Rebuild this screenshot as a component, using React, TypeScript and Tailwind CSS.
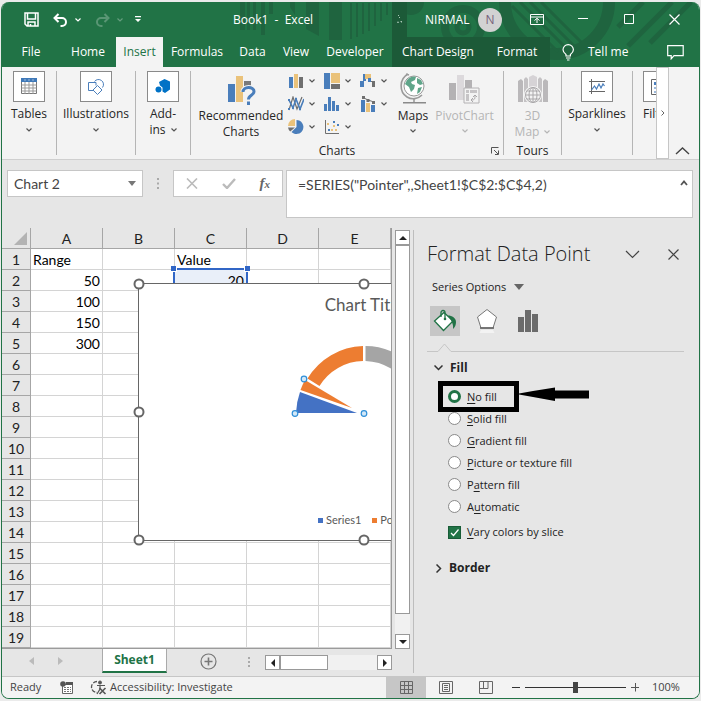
import { useState } from 'react'
import type { ReactNode } from 'react'
import clsx from 'clsx'

const columns = ['A', 'B', 'C', 'D', 'E']

const rows: Record<string, string>[] = [
  { A: 'Range', C: 'Value' },
  { A: '50', C: '20' },
  { A: '100' },
  { A: '150' },
  { A: '300' },
  ...Array.from({ length: 14 }, () => ({})),
]

const tabs = [
  { label: 'File', className: 'w-[58px]' },
  { label: 'Home', className: 'w-[56px]' },
  { label: 'Insert', className: 'w-[47px] bg-[#f3f3f3] text-[#217346]' },
  { label: 'Formulas', className: 'w-[68px]' },
  { label: 'Data', className: 'w-[43px]' },
  { label: 'View', className: 'w-[44px]' },
  { label: 'Developer', className: 'w-[74px]' },
  { label: 'Chart Design', className: 'w-[92px] bg-[#1c5a38]' },
  { label: 'Format', className: 'w-[66px] bg-[#1c5a38]' },
]

const fills = [
  { key: 'N', before: '', after: 'o fill' },
  { key: 'S', before: '', after: 'olid fill' },
  { key: 'G', before: '', after: 'radient fill' },
  { key: 'P', before: '', after: 'icture or texture fill' },
  { key: 'a', before: 'P', after: 'ttern fill' },
  { key: 'u', before: 'A', after: 'tomatic' },
]

function Chevron({ className }: { className?: string }) {
  return (
    <svg width="6" height="4" viewBox="0 0 6 4" className={className}>
      <path d="M.5.5 3 3 5.5.5" fill="none" stroke="currentColor" strokeWidth="1.2" />
    </svg>
  )
}

function HeaderArt() {
  return (
    <svg
      className="absolute right-0 top-0"
      width="697"
      height="65"
      viewBox="2 2 697 65"
      fill="#1f643f"
    >
      <path d="M240 2h5v28h-5zM247 2h3v28h-3zM253 2h3v28h-3zM261 2h4v33h-4zM269 2h4v12h-4zM290 2h5v13l-5-8zM306 2h13v34l-13-7zM329 2h13v38h-13z" />
      <path d="M350 3h2v36h-2zM356 3h2v34h-2zM362 3h2v31h-2zM368 3h2v28h-2zM374 3h2v23h-2zM380 3h2v18h-2zM386 3h2v12h-2z" />
      <circle cx="411" cy="2" r="13" />
      <g fill="none" stroke="#1f643f">
        <circle cx="463" cy="27" r="18" strokeWidth="8" />
        <circle cx="463" cy="27" r="6" strokeWidth="5" />
        <path d="M505 2a52 52 0 0 0 104 0" strokeWidth="12" />
        <path d="m512 6 46 46M520 2l50 50M530 2l46 46M541 2l40 40" strokeWidth="3" />
        <path d="m628 46 44-44M650 43l41-41M618 27l25-25" strokeWidth="5" />
      </g>
    </svg>
  )
}

function TitleBar() {
  return (
    <div className="relative flex h-[35px] items-center">
      <div className="flex w-[202px] items-center pl-[22px]">
        <button aria-label="Save">
          <svg width="15" height="15" viewBox="0 0 15 15" fill="none" stroke="#fff" strokeWidth="1.5">
            <path d="M1 1h13v13H3l-2-2zM3.5 1v6h8V1M4 14v-4h7v4M6.5 12v2" />
          </svg>
        </button>
        <button aria-label="Undo" className="ml-[14px]">
          <svg width="15" height="14" viewBox="0 0 15 14" fill="none" stroke="#fff" strokeWidth="2">
            <path d="M5.500 1 1.500 5l4 4M2 5h7a4 4 0 0 1 0 8H7.500" />
          </svg>
        </button>
        <Chevron className="ml-[7px]" />
        <button aria-label="Redo" className="ml-[14px] opacity-25">
          <svg width="15" height="14" viewBox="0 0 15 14" fill="none" stroke="#fff" strokeWidth="2">
            <path d="m9.500 1 4 4-4 4M13 5H6a4 4 0 0 0 0 8h1.500" />
          </svg>
        </button>
        <Chevron className="ml-[7px] opacity-30" />
        <button aria-label="Customize Quick Access Toolbar" className="ml-[12px]">
          <svg width="6" height="7" viewBox="0 0 6 7" fill="#fff">
            <path d="M0 0h6v1.200H0zM0 3h6L3 6z" />
          </svg>
        </button>
      </div>
      <h1 className="flex-1 whitespace-pre pl-[29px]">Book1  -  Excel</h1>
      <div className="h-full w-[15px] bg-[#1c5a38] pt-[13px] pl-[5px]">
        <svg width="6" height="9" viewBox="0 0 6 9" fill="#a9c7b6">
          <path d="M1 0h1v1H1zM2 2h1v1H2zM0 8l1-2 1 2zM3 6h2v2z" />
        </svg>
      </div>
      <div className="flex w-[107px] items-center justify-between pl-[18px] pr-[12px]">
        <span>NIRMAL</span>
        <span className="flex size-6 items-center justify-center rounded-full bg-[#d2d2d2] text-[#77627b]">
          N
        </span>
      </div>
      <div className="flex w-[185px] items-center justify-between pl-[16px] pr-[19px]">
        <button aria-label="Ribbon Display Options">
          <svg width="14" height="11" viewBox="0 0 14 11" fill="none" stroke="#fff">
            <path d="M.5.5h13v10H.5zM.5 3h13M7 9V4.500M4.500 6.500 7 4.300l2.500 2.200" />
          </svg>
        </button>
        <button aria-label="Minimize">
          <svg width="11" height="10" viewBox="0 0 11 10">
            <path d="M0 3.500h10" stroke="#fff" />
          </svg>
        </button>
        <button aria-label="Maximize">
          <svg width="11" height="11" viewBox="0 0 11 11">
            <path d="M.5.5h9v9H.5z" fill="none" stroke="#fff" />
          </svg>
        </button>
        <button aria-label="Close">
          <svg width="11" height="11" viewBox="0 0 11 11">
            <path d="m.5.5 10 10m0-10-10 10" stroke="#fff" strokeWidth="1.200" />
          </svg>
        </button>
      </div>
    </div>
  )
}

function TabBar() {
  return (
    <nav className="relative flex h-[30px]">
      {tabs.map((tab) => (
        <button key={tab.label} className={clsx('shrink-0', tab.className)}>
          {tab.label}
        </button>
      ))}
      <button className="ml-[12px] flex items-center gap-[13px]">
        <svg width="13" height="17" viewBox="0 0 13 17" fill="none" stroke="#fff" strokeWidth="1.200">
          <path d="M4 12V10.500C2 9 1 7.500 1 5.800a5.200 5.200 0 0 1 10.400 0c0 1.700-1 3.200-3 4.700V12zM4 14h4.500M5 16h2.500" />
        </svg>
        Tell me
      </button>
      <button aria-label="Comments" className="ml-auto mr-[15px]">
        <svg width="17" height="15" viewBox="0 0 17 15" fill="none" stroke="#fff" strokeWidth="1.200">
          <path d="M.7.7h15.500v10H7L4.200 13.800v-3.100H.7z" />
        </svg>
      </button>
    </nav>
  )
}

function BoxedIcon({ children }: { children: ReactNode }) {
  return (
    <span className="flex h-[31px] w-8 shrink-0 items-center justify-center border border-[#8a8a8a] bg-white">
      {children}
    </span>
  )
}

function Group({ className, children }: { className: string; children: ReactNode }) {
  return (
    <div className={clsx('my-1 shrink-0 border-r border-[#b5b5b5]', className)}>{children}</div>
  )
}

function BigButton({ label, icon }: { label: string; icon: ReactNode }) {
  return (
    <button className="flex w-full flex-col items-center">
      <BoxedIcon>{icon}</BoxedIcon>
      <span className="mt-[3px] leading-[18px]">{label}</span>
      <Chevron className="mt-[5px] text-[#555]" />
    </button>
  )
}

const TableIcon = () => (
  <svg width="17" height="17" viewBox="0 0 17 17">
    <path d="M.5.5h15v15H.5z" fill="#fff" stroke="#777" />
    <path d="M0 0h16v4H0z" fill="#3f79b8" />
    <path d="M.5 7h15M.5 10h15M.5 13h15M4 4v12M8 4v12M12 4v12" stroke="#999" />
    <path d="M3.500 1.500h1v1h-1zM7.500 1.500h1v1h-1zM11.500 1.500h1v1h-1z" fill="#fff" />
  </svg>
)

const ShapesIcon = () => (
  <svg width="18" height="16" viewBox="0 0 18 16" fill="none" stroke="#4a7ebb">
    <path d="M6 11.500H1.500v-8H9v3" />
    <path d="M7.500 2.500a5 5 0 1 1 8 6" />
    <path d="m10.500 6.500 4.500 4.500-4.500 4.500L6 11z" fill="#fff" />
  </svg>
)

const AddinIcon = () => (
  <svg width="16" height="15" viewBox="0 0 16 15" fill="#0072c6">
    <path d="m9.500 0 5.500 2.500v8L10 14 7.500 12.500V8.500L5 6.500 4 3z" />
    <circle cx="3.500" cy="10.500" r="3" />
  </svg>
)

const SparkIcon = () => (
  <svg width="18" height="16" viewBox="0 0 18 16" fill="none">
    <path d="M3.500 0v15M1 2.500h16M1 12.500h16" stroke="#666" />
    <path d="m3.500 11 3-4 2 3 2.500-5 2 4 2-4 1.500 2" stroke="#4a7ebb" strokeWidth="1.200" />
  </svg>
)

const smallCharts: { name: string; art: ReactNode }[] = [
  {
    name: 'Column',
    art: (
      <>
        <path d="M1 4h4v11H1z" fill="#4a7ebb" />
        <path d="M6 1h4v14H6z" fill="#eac27a" />
        <path d="M11 4h4v11h-4z" fill="#6f6f6f" />
      </>
    ),
  },
  {
    name: 'Hierarchy',
    art: (
      <>
        <path d="M0 0h6v16H0z" fill="#4a7ebb" />
        <path d="M7 0h9v10H7z" fill="#eac27a" />
        <path d="M7 11h9v5H7z" fill="#6f6f6f" />
      </>
    ),
  },
  {
    name: 'Waterfall',
    art: (
      <>
        <path d="M0 8h4v6H0zM3 1h3v7H3z" fill="#4a7ebb" />
        <path d="M5 1h6v4H8v1H5z" fill="#eac27a" />
        <path d="M8 5h3v4H8z" fill="#4a7ebb" />
        <path d="M11 8h4v6h-3V9h-1z" fill="#6f6f6f" />
      </>
    ),
  },
  {
    name: 'Line',
    art: (
      <g fill="none" strokeWidth="1.200">
        <path d="m1 14 4-13 4 12 5-12" stroke="#6f6f6f" />
        <path d="m1 4 4 8 3-9 4 10 4-10" stroke="#4a7ebb" strokeWidth="1.600" />
        <path d="M4 11h2v2H4zM7 2h2v2H7zM11 12h2v2h-2zM0 3h2v2H0zM0 12h2v2H0z" fill="#4a7ebb" />
      </g>
    ),
  },
  {
    name: 'Statistic',
    art: <path d="M0 8h3v7H0zM4 1h3v14H4zM8 5h3v10H8zM12 9h3v6h-3z" fill="#4a7ebb" />,
  },
  {
    name: 'Combo',
    art: (
      <>
        <path d="M1 4h4v12H1z" fill="#4a7ebb" />
        <path d="M6 7h4v9H6z" fill="#eac27a" />
        <path d="M11 9h4v7h-4z" fill="#4a7ebb" />
        <path d="m3 1.500 5 2.500 6 2" stroke="#6f6f6f" fill="none" />
        <path d="M2 0h3v3H2zM6.500 3h3v3h-3zM12 5h3v3h-3z" fill="#6f6f6f" />
      </>
    ),
  },
  {
    name: 'Pie',
    art: (
      <>
        <path d="M8.500 8V1a7 7 0 1 1-5 12z" fill="#4a7ebb" />
        <path d="M7 7H0a7 7 0 0 1 7-7z" fill="#eac27a" />
        <path d="M7 8.500H0a7 7 0 0 0 2.200 4z" fill="#6f6f6f" />
      </>
    ),
  },
  {
    name: 'Scatter',
    art: (
      <>
        <path d="M1.500 1v13.500H15" stroke="#6f6f6f" fill="none" />
        <path d="M3 4h2v2H3zM9 6h2v2H9zM11 10h2v2h-2zM7 10h2v2H7z" fill="#eac27a" />
        <path d="M9 2h2v2H9zM13 5h2v2h-2zM4 10h2v2H4z" fill="#4a7ebb" />
      </>
    ),
  },
]

const RecommendedIcon = () => (
  <svg width="29" height="30" viewBox="0 0 29 30">
    <path d="M1 8h7v18H1z" fill="#4a7ebb" />
    <path d="M9 0h7v26H9z" fill="#eac27a" />
    <path d="M17 5h7v8h-7z" fill="#7a7a7a" />
    <g fill="none" strokeLinejoin="round">
      <path d="M16 16c0-6 11-6 11-.5 0 4-5.500 3.500-5.500 8M21.500 25v4" stroke="#f3f3f3" strokeWidth="5" />
      <path d="M16 16c0-6 11-6 11-.5 0 4-5.500 3.500-5.500 8M21.500 25.500v3.500" stroke="#4a7ebb" strokeWidth="3" />
    </g>
  </svg>
)

const GlobeIcon = () => (
  <svg width="26" height="31" viewBox="0 0 26 31">
    <circle cx="14" cy="13" r="10" fill="#fff" stroke="#999" />
    <path
      d="M7 7c3-4 8-4 9-3l-1 3-4 2 1 2 3 1-1 4-3 3-2-5-4-3zM17 5l4 2 2 4-3 1-3-2zM18 15l4-1-2 5-3 2z"
      fill="#5fa58a"
    />
    <path d="M8 1C-1 6-1 19 7 24c5 3 11 2 15-2M6 1l3 1M14 25v4" fill="none" stroke="#9a9a9a" strokeWidth="1.600" />
    <path d="M3 29h23v1.500H3z" fill="#8a8a8a" />
  </svg>
)

const PivotIcon = () => (
  <svg width="31" height="32" viewBox="0 0 31 32">
    <path d="M0 10h7v17H0z" fill="#b4b2b4" />
    <path d="M8 2h7v25H8z" fill="#dcd9dc" />
    <path d="M16 7h7v10h-7z" fill="#b4b2b4" />
    <path d="M15 15h15v15H15z" fill="#f3f3f3" stroke="#b4b2b4" />
    <path d="M17 17h3v3h-3zM21 17h7v3h-7zM17 21h3v7h-3z" fill="#c6c4c6" />
    <path d="M22 27c4 0 4-1 4-5M24 24l2-2 2 2M24 25l-2 2 2 2" fill="none" stroke="#aaa8aa" />
  </svg>
)

const MapIcon = () => (
  <svg width="30" height="29" viewBox="0 0 30 29">
    <path d="M0 6l3-2 2 2v21H0zM25 6l2-2 3 2v21h-5z" fill="#bab8ba" />
    <path d="M6 4l2-2 2 2v23H6zM20 4l2-2 2 2v23h-4z" fill="#c4c2c4" />
    <path d="M11 2l4-2 4 2v14h-8z" fill="#d6d3d6" />
    <g fill="none" stroke="#aaa8aa">
      <circle cx="15" cy="20" r="8" fill="#f3f3f3" stroke="#f3f3f3" strokeWidth="2" />
      <circle cx="15" cy="20" r="7.500" fill="#f3f3f3" />
      <path d="M7.500 20h15M9 16h12M9 24h12M15 12.500v15" />
      <ellipse cx="15" cy="20" rx="4" ry="7.500" />
    </g>
  </svg>
)

function Ribbon() {
  return (
    <div className="flex h-[93px] border-b border-[#cfcfcf] bg-[#f3f3f3] leading-4 text-[#262626]">
      <Group className="w-[55px]">
        <BigButton label="Tables" icon={<TableIcon />} />
      </Group>
      <Group className="w-[79px]">
        <BigButton label="Illustrations" icon={<ShapesIcon />} />
      </Group>
      <Group className="w-[55px]">
        <button className="flex w-full flex-col items-center">
          <BoxedIcon>
            <AddinIcon />
          </BoxedIcon>
          <span className="mt-[4px]">Add-</span>
          <span className="flex items-center gap-[5px]">
            ins <Chevron className="text-[#555]" />
          </span>
        </button>
      </Group>
      <Group className="relative flex w-[313px] flex-col">
        <div className="flex flex-1">
          <button className="flex w-[92px] shrink-0 flex-col items-center pl-2 pt-[5px]">
            <RecommendedIcon />
            <span className="mt-[2px]">Recommended</span>
            <span>Charts</span>
          </button>
          <div className="ml-[5px] grid w-[108px] shrink-0 grid-cols-3 content-start gap-y-[7px] pt-[2px]">
            {smallCharts.map((c) => (
              <button key={c.name} aria-label={c.name} className="flex items-center gap-[5px]">
                <svg width="16" height="16" viewBox="0 0 16 16">
                  {c.art}
                </svg>
                <Chevron className="text-[#555]" />
              </button>
            ))}
          </div>
          <button className="flex w-[34px] shrink-0 flex-col items-center pt-[2px]">
            <GlobeIcon />
            <span className="mt-[4px]">Maps</span>
            <Chevron className="mt-[5px] text-[#555]" />
          </button>
          <button className="flex flex-1 flex-col items-center pt-[2px] pr-[4px] text-[#b5b5b5]" disabled>
            <PivotIcon />
            <span className="mt-[3px]">PivotChart</span>
            <Chevron className="mt-[5px]" />
          </button>
        </div>
        <div className="absolute -bottom-[4px] w-full pr-[20px] text-center">Charts</div>
        <button aria-label="Charts dialog" className="absolute bottom-0 right-[3px]">
          <svg width="9" height="8" viewBox="0 0 9 8" fill="none" stroke="#555">
            <path d="M.5 6.500v-6h7M3 3l4 4M7.500 3.500v4H4" />
          </svg>
        </button>
      </Group>
      <Group className="flex w-[58px] flex-col">
        <button className="flex flex-col items-center pt-[4px] text-[#b5b5b5]" disabled>
          <MapIcon />
          <span className="mt-[4px]">3D</span>
          <span className="flex items-center gap-[5px]">
            Map <Chevron />
          </span>
        </button>
        <div className="-mb-[4px] mt-auto text-center">Tours</div>
      </Group>
      <Group className="w-[71px]">
        <BigButton label="Sparklines" icon={<SparkIcon />} />
      </Group>
      <div className="my-1 flex-1 overflow-hidden pl-[10px]">
        <BoxedIcon>
          <svg width="16" height="16" viewBox="0 0 16 16">
            <path d="M.5.5H14v15H.5z" fill="#fff" stroke="#666" />
            <path d="M3 3h10v3H3z" fill="#4a7ebb" />
            <path d="M3 8h10v2H3zM3 12h10v2H3z" fill="#9db9da" />
          </svg>
        </BoxedIcon>
        <div className="mt-[3px] leading-[18px]">Filters</div>
      </div>
      <button
        aria-label="Scroll ribbon"
        className="flex w-[13px] shrink-0 items-center justify-center border border-[#c6c6c6] bg-white"
      >
        <svg width="4" height="6" viewBox="0 0 4 6">
          <path d="M.5.5 3 3 .5 5.500" fill="none" stroke="#666" />
        </svg>
      </button>
      <button aria-label="Collapse ribbon" className="flex w-[30px] shrink-0 items-end justify-center pb-[4px] pr-[3px]">
        <svg width="15" height="8" viewBox="0 0 15 8">
          <path d="m1 7 6.500-6L14 7" fill="none" stroke="#444" strokeWidth="1.400" />
        </svg>
      </button>
    </div>
  )
}

function FormulaBar() {
  return (
    <div className="flex h-[68px] items-start gap-[3px] pl-[5px] pr-[6px] pt-[10px] font-[Lato,sans-serif] text-[14px] text-[#444]">
      <div className="flex h-[27px] w-[136px] shrink-0 items-center border border-[#c6c6c6] bg-white">
        <input aria-label="Name box" defaultValue="Chart 2" className="w-full min-w-0 pl-[6px] outline-none" />
        <button aria-label="Name list" className="pr-[6px]">
          <svg width="8" height="5" viewBox="0 0 8 5">
            <path d="M0 0h8L4 5z" fill="#777" />
          </svg>
        </button>
      </div>
      <svg width="24" height="27" viewBox="0 0 24 27" className="shrink-0" fill="#a9a9a9">
        <path d="M11 8h2v2h-2zM11 12.500h2v2h-2zM11 17h2v2h-2z" />
      </svg>
      <div className="flex h-[27px] w-[110px] shrink-0 items-center justify-between border border-[#c6c6c6] bg-white px-[12px]">
        <button aria-label="Cancel">
          <svg width="12" height="11" viewBox="0 0 12 11">
            <path d="m1 .5 10 10m0-10-10 10" stroke="#bbb" strokeWidth="1.600" />
          </svg>
        </button>
        <button aria-label="Enter">
          <svg width="14" height="11" viewBox="0 0 14 11">
            <path d="m1 6 4 4L13 1" stroke="#bbb" strokeWidth="2.400" fill="none" />
          </svg>
        </button>
        <button
          aria-label="Insert function"
          className="font-['Liberation_Serif',serif] text-[15px] font-bold italic leading-4 text-[#666]"
        >
          f<span className="text-[11px]">x</span>
        </button>
      </div>
      <div className="flex h-[48px] min-w-0 flex-1 items-start border border-[#c6c6c6] bg-white">
        <textarea
          aria-label="Formula"
          rows={1}
          defaultValue={'=SERIES("Pointer",,Sheet1!$C$2:$C$4,2)'}
          className="min-w-0 flex-1 resize-none overflow-hidden pl-[11px] pt-[4px] leading-5 outline-none"
        />
        <button aria-label="Collapse formula bar" className="pr-[4px] pt-[9px]">
          <svg width="8" height="6" viewBox="0 0 8 6">
            <path d="m1 5 3-3.500L7 5" fill="none" stroke="#555" strokeWidth="1.800" />
          </svg>
        </button>
      </div>
    </div>
  )
}

function Handle({ className }: { className: string }) {
  return (
    <span
      className={clsx(
        'absolute size-[11px] -translate-1/2 rounded-full border-2 border-[#666] bg-white',
        className,
      )}
    />
  )
}

function Chart() {
  return (
    <figure className="absolute left-[136px] top-[55px] h-[258px] w-[452px] border border-[#666] bg-white text-[#595959]">
      <figcaption className="mt-[9px] text-center text-[17px] leading-6">Chart Title</figcaption>
      <svg className="absolute left-0 top-0" width="450" height="256" viewBox="0 0 450 256">
        <path d="M157 129A69 69 0 0 1 161 108L218 129z" fill="#4472c4" />
        <path d="M161.500 106a69 69 0 0 1 4.500-10L213 124z" fill="#ed7d31" />
        <path d="M168.500 94.500A67 67 0 0 1 224 62v15a52 52 0 0 0-43.500 25z" fill="#ed7d31" />
        <path d="M226.500 62A67 67 0 0 1 285 97l-14 8a52 52 0 0 0-44.500-28z" fill="#a5a5a5" />
        <g fill="#d3e8f8" stroke="#2f8fd8" strokeWidth="1.200">
          <circle cx="165" cy="95" r="2.800" />
          <circle cx="156" cy="129.500" r="2.800" />
          <circle cx="225" cy="129.500" r="2.800" />
        </g>
      </svg>
      <div className="absolute bottom-[12px] left-[179px] flex items-center gap-[3px] text-[11px] leading-4">
        <i className="size-[5px] bg-[#4472c4]" />
        <span>Series1</span>
        <i className="ml-[8px] size-[5px] bg-[#ed7d31]" />
        <span>Pointer</span>
      </div>
      <Handle className="left-0 top-0" />
      <Handle className="left-1/2 top-0" />
      <Handle className="left-0 top-1/2" />
      <Handle className="left-0 top-full" />
      <Handle className="left-1/2 top-full" />
    </figure>
  )
}

function Sheet() {
  return (
    <div className="relative min-w-0 flex-1 overflow-hidden border-r border-b border-[#9b9b9b] bg-white font-[Lato,sans-serif] text-[14px] leading-[18px] text-black">
      <table className="w-[389px] table-fixed border-separate border-spacing-0">
        <thead>
          <tr className="h-[21px] bg-[#e6e6e6] text-[#222]">
            <th className="w-[29px] border-b border-r border-[#a6a6a6] p-0" aria-label="Select all">
              <svg width="13" height="13" viewBox="0 0 13 13" className="ml-auto mr-[3px]">
                <path d="M13 0v13H0z" fill="#b3b3b3" />
              </svg>
            </th>
            {columns.map((c) => (
              <th key={c} className="border-b border-r border-[#a6a6a6] px-0 pb-0 pt-[2px] font-normal">
                {c}
              </th>
            ))}
          </tr>
        </thead>
        <tbody>
          {rows.map((row, i) => (
            <tr key={i} className="h-[21px]">
              <th className="border-b border-r border-[#a6a6a6] bg-[#e6e6e6] px-0 pb-0 pt-[2px] font-normal text-[#222]">
                {i + 1}
              </th>
              {columns.map((c) => {
                const value = row[c] ?? ''
                const ranged = c === 'C' && i === 1
                return (
                  <td
                    key={c}
                    className={clsx(
                      'relative h-[21px] border-b border-r border-[#d4d4d4] px-[2px] pb-0 pt-[2px]',
                      i > 0 && 'text-right',
                      ranged && 'bg-[#e9eff9]',
                    )}
                  >
                    {value}
                    {ranged && (
                      <>
                        <span className="absolute -inset-x-[2px] -top-[2px] bottom-0 border-2 border-[#3166c6]" />
                        <span className="absolute -left-[4px] -top-[4px] size-[6px] border-r border-b border-white bg-[#3166c6]" />
                        <span className="absolute -right-[4px] -top-[4px] size-[6px] border-b border-l border-white bg-[#3166c6]" />
                      </>
                    )}
                  </td>
                )
              })}
            </tr>
          ))}
        </tbody>
      </table>
      <Chart />
    </div>
  )
}

function ScrollButton({ label, d }: { label: string; d: string }) {
  return (
    <button
      aria-label={label}
      className="flex size-[15px] shrink-0 items-center justify-center border border-[#999] bg-white"
    >
      <svg width="8" height="8" viewBox="0 0 8 8">
        <path d={d} fill="#222" />
      </svg>
    </button>
  )
}

function SheetTabs() {
  return (
    <div className="flex h-[27px] items-start pr-[21px]">
      <div className="flex w-[100px] gap-[24px] pl-[27px] pt-[8px]">
        <button aria-label="Previous sheet">
          <svg width="5" height="8" viewBox="0 0 5 8">
            <path d="M5 0v8L0 4z" fill="#bbb" />
          </svg>
        </button>
        <button aria-label="Next sheet">
          <svg width="5" height="8" viewBox="0 0 5 8">
            <path d="M0 0v8l5-4z" fill="#bbb" />
          </svg>
        </button>
      </div>
      <button className="h-6 w-[65px] border-x border-b-2 border-x-[#aaa] border-b-[#217346] bg-white text-[12px] font-bold text-[#217346]">
        Sheet1
      </button>
      <button aria-label="New sheet" className="ml-[33px] mt-[4px]">
        <svg width="17" height="17" viewBox="0 0 17 17" fill="none" stroke="#777">
          <circle cx="8.500" cy="8.500" r="7.500" strokeWidth="1.200" />
          <path d="M8.500 4.500v8M4.500 8.500h8" strokeWidth="1.600" />
        </svg>
      </button>
      <svg width="3" height="12" viewBox="0 0 3 12" className="ml-auto mr-[14px] mt-[8px]" fill="#aaa">
        <path d="M0 0h2v2H0zM0 4h2v2H0zM0 8h2v2H0z" />
      </svg>
      <div className="mt-[6px] flex w-[127px] bg-[#f1f1f1]">
        <ScrollButton label="Scroll left" d="M6 0v8L2 4z" />
        <span className="mr-auto h-[15px] w-[48px] border border-[#999] bg-white" />
        <ScrollButton label="Scroll right" d="M2 0v8l4-4z" />
      </div>
    </div>
  )
}

function FormatPane() {
  const [fill, setFill] = useState(0)
  const [vary, setVary] = useState(true)

  return (
    <aside className="mb-[3px] mt-[2px] w-[286px] shrink-0 border-l border-[#bdbdbd] pl-[13px] pr-[15px] text-[#222]">
      <div className="flex h-[48px] items-center">
        <h2 className="flex-1 whitespace-nowrap text-[20px] font-light">Format Data Point</h2>
        <button aria-label="Pane options">
          <svg width="15" height="9" viewBox="0 0 15 9">
            <path d="m1 1 6.500 6.500L14 1" fill="none" stroke="#444" strokeWidth="1.200" />
          </svg>
        </button>
        <button aria-label="Close pane" className="ml-[28px] mr-[5px]">
          <svg width="11" height="11" viewBox="0 0 11 11">
            <path d="m.5.5 10 10m0-10-10 10" stroke="#444" strokeWidth="1.200" />
          </svg>
        </button>
      </div>
      <div className="flex h-[18px] items-center pl-[5px]">
        <select aria-label="Options for" className="w-[82px] appearance-none text-[11px] outline-none">
          <option>Series Options</option>
        </select>
        <svg width="10" height="6" viewBox="0 0 10 6" className="pointer-events-none">
          <path d="M0 0h10L5 6z" fill="#666" />
        </svg>
      </div>
      <div className="mt-[10px] flex items-center pl-[3px]">
        <button aria-label="Fill & Line" className="flex size-[30px] items-center justify-center bg-[#c6c6c6]">
          <svg width="24" height="24" viewBox="0 0 24 24">
            <path d="M11 3.500 20 12l-9.500 9.500L1.500 12z" fill="#fff" stroke="#217346" strokeWidth="1.300" />
            <path d="M8 8V3.500a2 2 0 0 1 4 0V10" fill="none" stroke="#217346" strokeWidth="1.300" />
            <circle cx="12" cy="10" r="1.300" fill="#217346" />
            <path d="M15 6.500c4 0 8 2.500 8 6.500 0 3-1 5-3 7 .5-4-.5-7-5-13.500z" fill="#217346" />
          </svg>
        </button>
        <button aria-label="Effects" className="ml-[16px]">
          <svg width="22" height="26" viewBox="0 0 22 26">
            <path d="m11 1.500 9.500 7.500L17 20H5L1.500 9z" fill="#fff" stroke="#777" />
            <path d="M4 20h14" stroke="#666" strokeWidth="1.600" />
            <path d="m5 22-1.500 3h15L17 22z" fill="#f3f3f3" />
          </svg>
        </button>
        <button aria-label="Series Options" className="ml-[20px]">
          <svg width="21" height="22" viewBox="0 0 21 22" fill="#6b6b6b">
            <path d="M0 7h6v15H0zM7 0h6v22H7zM14 4h6v18h-6z" />
          </svg>
        </button>
      </div>
      <div className="mt-[7px] flex h-[9px]">
        <span className="w-[10px] border-b border-[#c6c6c6]" />
        <svg width="15" height="9" viewBox="0 0 15 9">
          <path d="M0 8.500h1L7.500 1 14 8.500h1" fill="none" stroke="#c6c6c6" />
        </svg>
        <span className="flex-1 border-b border-[#c6c6c6]" />
      </div>
      <button className="mt-[6px] flex h-5 items-center gap-[7px] pl-[7px] text-[12px] font-bold">
        <svg width="9" height="6" viewBox="0 0 9 6">
          <path d="M.5.5 4.500 4.500 8.500.5" fill="none" stroke="#333" strokeWidth="1.500" />
        </svg>
        Fill
      </button>
      <fieldset className="relative mt-[8px] pl-[21px] text-[11px]">
        {fills.map((f, i) => (
          <label key={f.key} className="flex h-[22px] items-start gap-[6px] leading-[22px]">
            <input
              type="radio"
              name="fill"
              checked={fill === i}
              onChange={() => setFill(i)}
              className="mt-[4px] size-[13px] appearance-none rounded-full border border-[#8a8a8a] bg-white checked:border-[3px] checked:border-[#217346]"
            />
            <span>
              {f.before}
              <u className="underline-offset-2">{f.key}</u>
              {f.after}
            </span>
          </label>
        ))}
        {/* callout around the first option */}
        <div className="pointer-events-none absolute -top-[5px] left-[11px] h-[31px] w-[81px] border-[5px] border-black" />
        <svg
          className="pointer-events-none absolute left-[92px] top-px"
          width="71"
          height="14"
          viewBox="0 0 71 14"
        >
          <path d="M0 6.500 14 4 36 .5v3h34v8H36V14L14 10 0 7.500z" />
        </svg>
      </fieldset>
      <label className="mt-[2px] flex h-6 items-center gap-[6px] pl-[21px] text-[11px]">
        <span className="relative flex">
          <input
            type="checkbox"
            checked={vary}
            onChange={() => setVary(!vary)}
            className="size-[13px] appearance-none border border-[#8a8a8a] bg-white checked:border-[#185c37] checked:bg-[#217346]"
          />
          {vary && (
            <svg width="13" height="13" viewBox="0 0 13 13" className="pointer-events-none absolute inset-0">
              <path d="m3 7 2.500 2.500 5-6" fill="none" stroke="#fff" strokeWidth="1.200" />
            </svg>
          )}
        </span>
        <span>
          <u className="underline-offset-2">V</u>ary colors by slice
        </span>
      </label>
      <button className="mt-[14px] flex h-5 items-center gap-[7px] pl-[9px] text-[12px] font-bold">
        <svg width="6" height="9" viewBox="0 0 6 9">
          <path d="M.5.5 4.500 4.500.5 8.500" fill="none" stroke="#333" strokeWidth="1.500" />
        </svg>
        Border
      </button>
    </aside>
  )
}

function StatusBar() {
  return (
    <footer className="flex h-[22px] items-center border-t border-[#c6c6c6] bg-[#f3f3f3] text-[11px] text-[#444]">
      <span className="w-[58px] pl-2">Ready</span>
      <button aria-label="Macro recording">
        <svg width="13" height="13" viewBox="0 0 13 13">
          <path d="M2.500 3.500h10v9h-10z" fill="#fff" stroke="#666" />
          <path d="M6 1h7v3H6z" fill="#555" />
          <path d="M4 6.500h7M4 8.500h7M4 10.500h7" stroke="#777" strokeDasharray="2 1" />
          <circle cx="3" cy="3" r="2.800" fill="#555" />
        </svg>
      </button>
      <button className="ml-[17px] flex items-center gap-[3px] whitespace-nowrap">
        <svg width="17" height="15" viewBox="0 0 17 15" fill="none" stroke="#555">
          <path d="M7 1.500a5.500 5.500 0 1 0 0 11" strokeDasharray="4 1.500" strokeWidth="1.300" />
          <path d="M7 5.500h8M10 5v4l-3 5" strokeWidth="1.200" />
          <circle cx="10" cy="2.500" r="1.500" fill="#555" />
          <path d="m9.500 8 6 6m0-6-6 6" strokeWidth="1.600" />
        </svg>
        Accessibility: Investigate
      </button>
      <div className="ml-auto flex h-full items-center">
        <button aria-label="Normal view" className="flex h-full w-10 items-center justify-center bg-[#c6c6c6]">
          <svg width="13" height="13" viewBox="0 0 13 13" fill="none" stroke="#666">
            <path d="M.5.5h12v12H.5zM.5 4.500h12M.5 8.500h12M4.500.5v12M8.500.5v12" />
          </svg>
        </button>
        <button aria-label="Page layout view" className="flex w-10 justify-center">
          <svg width="14" height="13" viewBox="0 0 14 13" fill="none" stroke="#666">
            <path d="M.5.5h13v12H.5zM3.500 2.500h7v8h-7zM5 4.500h4M5 6.500h4M5 8.500h4" />
          </svg>
        </button>
        <button aria-label="Page break view" className="flex w-10 justify-center">
          <svg width="14" height="13" viewBox="0 0 14 13" fill="none" stroke="#666">
            <path d="M.5.5h13v12H.5zM4.500.5v7M.5 7.500h8.500V.5" />
          </svg>
        </button>
        <button aria-label="Zoom out" className="ml-[6px]">
          <svg width="8" height="9" viewBox="0 0 8 9">
            <path d="M0 4.500h8" stroke="#333" />
          </svg>
        </button>
        <input
          type="range"
          aria-label="Zoom"
          defaultValue={50}
          className="mx-[5px] h-[11px] w-[101px] appearance-none bg-[linear-gradient(#333,#333)] bg-[length:100%_1px] bg-center bg-no-repeat [&::-webkit-slider-thumb]:h-[11px] [&::-webkit-slider-thumb]:w-[5px] [&::-webkit-slider-thumb]:appearance-none [&::-webkit-slider-thumb]:bg-[#444]"
        />
        <button aria-label="Zoom in">
          <svg width="9" height="9" viewBox="0 0 9 9">
            <path d="M0 4.500h8M4.500 0v8.500" stroke="#555" />
          </svg>
        </button>
        <span className="w-[59px] pl-[12px]">100%</span>
      </div>
    </footer>
  )
}

export default function App() {
  return (
    <div className="min-h-screen bg-[#ebebeb] px-px pb-[2px] pt-[2px] font-['Open_Sans',sans-serif] text-[12px] text-[#333]">
      <div className="overflow-hidden rounded-lg border-x border-b border-[#217346] bg-[#e6e6e6]">
        <header className="relative overflow-hidden bg-[#217346] text-white">
          <HeaderArt />
          <TitleBar />
          <TabBar />
        </header>
        <Ribbon />
        <FormulaBar />
        <main className="flex">
          <div className="flex min-w-0 flex-1 flex-col">
            <div className="flex">
              <Sheet />
              <div className="mx-[3px] mt-[2px] flex w-[15px] flex-col bg-[#f1f1f1]">
                <ScrollButton label="Scroll up" d="M0 6h8L4 2z" />
                <span className="h-[369px] border border-[#999] bg-white" />
                <span className="flex-1" />
                <ScrollButton label="Scroll down" d="M0 2h8L4 6z" />
              </div>
            </div>
            <SheetTabs />
          </div>
          <FormatPane />
        </main>
        <StatusBar />
      </div>
    </div>
  )
}
